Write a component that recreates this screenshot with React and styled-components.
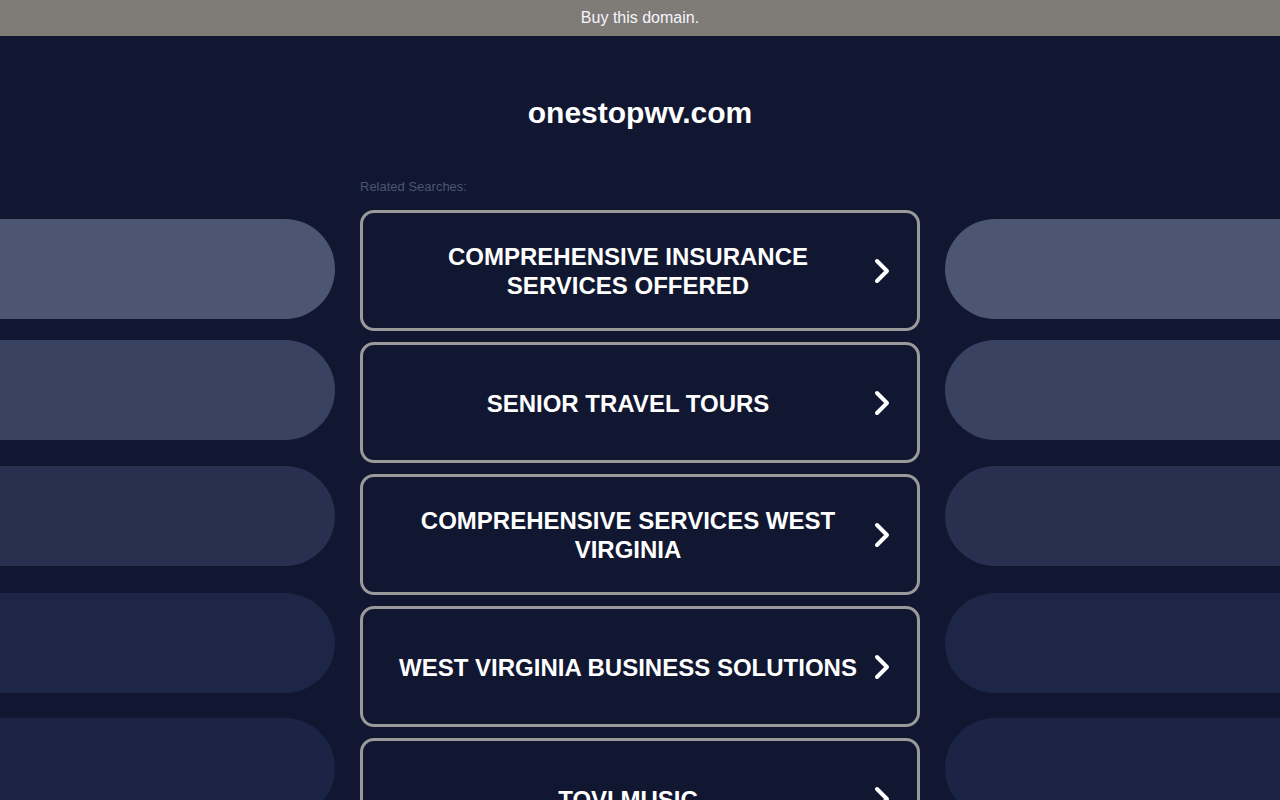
import React from "react";
import styled, { createGlobalStyle } from "styled-components";

const searches = [
  "Comprehensive Insurance Services Offered",
  "Senior Travel Tours",
  "Comprehensive Services West Virginia",
  "West Virginia Business Solutions",
  "Tovi Music",
];

// side decoration: background shade and the space above each pill
const pills = [
  { color: "#4c5572", gap: 0 },
  { color: "#3a4261", gap: 21 },
  { color: "#282f4f", gap: 26 },
  { color: "#1e2647", gap: 27 },
  { color: "#1b2444", gap: 25 },
];

const GlobalStyle = createGlobalStyle`
  html, body {
    margin: 0;
    padding: 0;
    background: #111730;
    font-family: "Liberation Sans", Arial, sans-serif;
  }
`;

const TopBar = styled.div`
  height: 36px;
  line-height: 35px;
  background: #7f7b77;
  color: #f4f6fb;
  font-size: 16px;
  text-align: center;
`;

const Layout = styled.div`
  display: grid;
  grid-template-columns: 1fr 560px 1fr;
  column-gap: 25px;
`;

const Side = styled.div`
  display: flex;
  flex-direction: column;
  padding-top: 183px;
`;

const Pill = styled.div`
  height: 100px;
  margin-top: ${(p) => p.$gap}px;
  background: ${(p) => p.$color};
  border-radius: ${(p) => (p.$right ? "50px 0 0 50px" : "0 50px 50px 0")};
`;

const Center = styled.div`
  display: flex;
  flex-direction: column;
  padding-top: 59px;
`;

const Title = styled.h1`
  margin: 0;
  font-size: 30px;
  line-height: 36px;
  font-weight: bold;
  color: #fff;
  text-align: center;
`;

const Label = styled.div`
  margin: 48px 0 15px;
  font-size: 13px;
  line-height: 16px;
  color: #4a5673;
`;

const List = styled.div`
  display: flex;
  flex-direction: column;
  gap: 11px;
`;

const SearchLink = styled.a`
  box-sizing: border-box;
  height: 121px;
  display: flex;
  align-items: center;
  padding: 0 27px 0 19px;
  border: 3px solid #9a9a9a;
  border-radius: 14px;
  color: #fff;
  text-decoration: none;
  cursor: pointer;
`;

const SearchText = styled.span`
  flex: 1;
  padding: 1px 12px 0;
  text-align: center;
  font-size: 24px;
  line-height: 29px;
  font-weight: bold;
  text-transform: uppercase;
`;

const Chevron = () => (
  <svg width="16" height="26" viewBox="0 0 16 26">
    <path
      d="M3 3 L13 13 L3 23"
      fill="none"
      stroke="#fff"
      strokeWidth="4"
      strokeLinecap="round"
      strokeLinejoin="round"
    />
  </svg>
);

export default function App() {
  return (
    <>
      <GlobalStyle />
      <TopBar>Buy this domain.</TopBar>
      <Layout>
        <Side>
          {pills.map((p, i) => (
            <Pill key={i} $color={p.color} $gap={p.gap} />
          ))}
        </Side>
        <Center>
          <Title>onestopwv.com</Title>
          <Label>Related Searches:</Label>
          <List>
            {searches.map((s) => (
              <SearchLink key={s}>
                <SearchText>{s}</SearchText>
                <Chevron />
              </SearchLink>
            ))}
          </List>
        </Center>
        <Side>
          {pills.map((p, i) => (
            <Pill key={i} $color={p.color} $gap={p.gap} $right />
          ))}
        </Side>
      </Layout>
    </>
  );
}
